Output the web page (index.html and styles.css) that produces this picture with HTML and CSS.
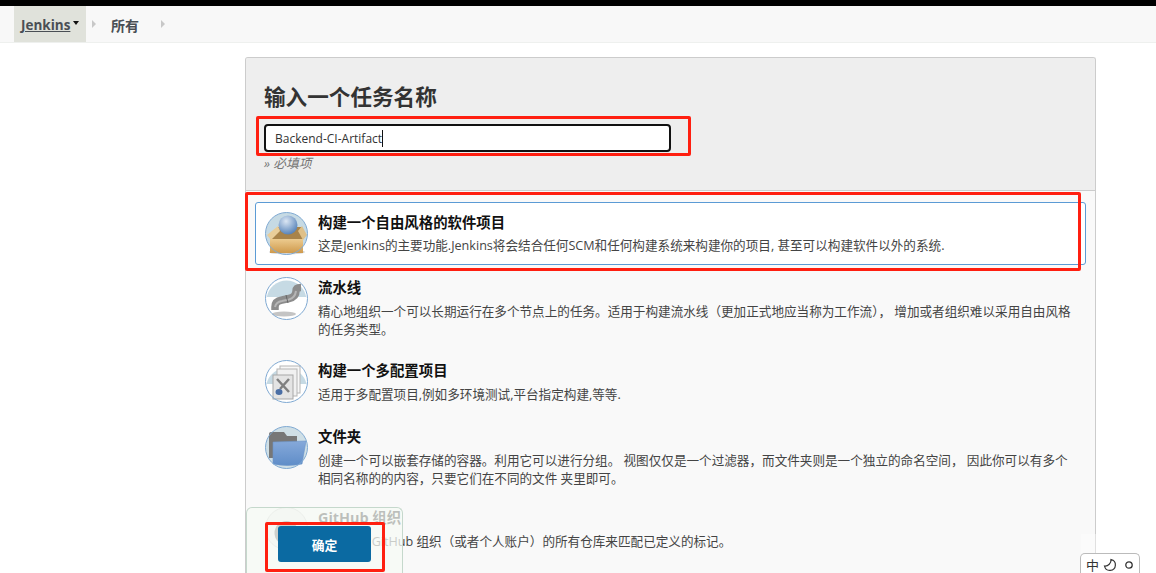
FILE: index.html
```html
<!DOCTYPE html>
<html lang="zh-CN">

<head>
    <meta charset="UTF-8">
    <title>Jenkins</title>
    <link rel="stylesheet" href="styles.css">
</head>

<body>
    <div class="top-strip"></div>
    <nav class="breadcrumbs">
        <div class="crumb crumb-home"><a href="#">Jenkins</a><span class="caret"></span></div>
        <span class="crumb-arrow"></span>
        <div class="crumb crumb-all">所有</div>
        <span class="crumb-arrow"></span>
    </nav>

    <main class="panel">
        <div class="panel-header">
            <h2>输入一个任务名称</h2>
            <div class="name-input">Backend-CI-Artifact<span class="cursor"></span></div>
            <div class="required">» 必填项</div>
        </div>

        <ul class="job-list">
            <li class="job job-active">
                <svg class="job-icon" viewBox="0 0 43 43">
                    <defs>
                        <radialGradient id="ball" cx="0.4" cy="0.3" r="0.75">
                            <stop offset="0" stop-color="#dbe6f3" />
                            <stop offset="1" stop-color="#4f7db6" />
                        </radialGradient>
                        <linearGradient id="carton" x1="0" y1="0" x2="0" y2="1">
                            <stop offset="0" stop-color="#eccb8f" />
                            <stop offset="1" stop-color="#cf9a4c" />
                        </linearGradient>
                        <linearGradient id="folder" x1="0" y1="0" x2="0" y2="1">
                            <stop offset="0" stop-color="#86a9da" />
                            <stop offset="1" stop-color="#5f8dc8" />
                        </linearGradient>
                    </defs>
                    <circle cx="21.5" cy="21.5" r="21" fill="#c6dae4" />
                    <ellipse cx="22" cy="40" rx="18" ry="2.500" fill="#d8d8d8" />
                    <path d="M13 15 H37 L38 27 H5 Z" fill="#a8834a" />
                    <circle cx="23" cy="13" r="9.500" fill="url(#ball)" />
                    <path d="M2 23 L13 14 L15 19 L6 28 Z" fill="#e8cd9a" />
                    <path d="M42 23 L37 14 L33 19 L38 28 Z" fill="#dfc088" />
                    <path d="M5 27 H38 V41 H5 Z" fill="url(#carton)" />
                    <circle cx="21.5" cy="21.5" r="21" fill="none" stroke="#7fa9d2" />
                </svg>
                <div class="job-text">
                    <h3>构建一个自由风格的软件项目</h3>
                    <p>这是Jenkins的主要功能.Jenkins将会结合任何SCM和任何构建系统来构建你的项目, 甚至可以构建软件以外的系统.</p>
                </div>
            </li>
            <li class="job">
                <svg class="job-icon" viewBox="0 0 43 43">
                    <circle cx="21.5" cy="21.5" r="21" fill="#fff" />
                    <path d="M1.800 20 A20 20 0 0 1 41.200 20 Z" fill="#c6dae4" />
                    <ellipse cx="19" cy="37" rx="12" ry="2.500" fill="#c4c4c4" />
                    <path d="M10 33 V30 Q10 24 17 23 L24 21.500 Q31 20 31 14 Q31 10.500 36 10.500" fill="none" stroke="#8c8c8c" stroke-width="7.500" />
                    <path d="M10 30 Q11 25 17 24 L24 22.500 Q30 21 31 14" fill="none" stroke="#b5b5b5" stroke-width="2" />
                    <path d="M21 18 L23 26" stroke="#666" stroke-width="1" />
                    <circle cx="21.5" cy="21.5" r="21" fill="none" stroke="#7fa9d2" />
                </svg>
                <div class="job-text">
                    <h3>流水线</h3>
                    <p>精心地组织一个可以长期运行在多个节点上的任务。适用于构建流水线（更加正式地应当称为工作流）， 增加或者组织难以采用自由风格的任务类型。</p>
                </div>
            </li>
            <li class="job">
                <svg class="job-icon" viewBox="0 0 43 43">
                    <circle cx="21.5" cy="21.5" r="21" fill="#fff" />
                    <path d="M1.500 24 A20.500 20.500 0 0 1 41.500 24 Z" fill="#c6dae4" />
                    <rect x="15" y="6" width="20" height="27" fill="#f7f7f7" stroke="#b5b5b5" />
                    <rect x="12" y="9" width="20" height="27" fill="#f1f1f1" stroke="#b5b5b5" />
                    <rect x="8" y="15" width="20" height="24" fill="#e4e4e4" stroke="#a8a8a8" />
                    <path d="M12 19 L24 32 M24 19 L15 29" stroke="#808080" stroke-width="2.500" fill="none" />
                    <ellipse cx="14" cy="32" rx="3.500" ry="3" fill="#4a6ea5" />
                    <circle cx="21.5" cy="21.5" r="21" fill="none" stroke="#7fa9d2" />
                </svg>
                <div class="job-text">
                    <h3>构建一个多配置项目</h3>
                    <p>适用于多配置项目,例如多环境测试,平台指定构建,等等.</p>
                </div>
            </li>
            <li class="job">
                <svg class="job-icon" viewBox="0 0 43 43">
                    <circle cx="21.5" cy="21.5" r="21" fill="#cfdfe6" />
                    <path d="M4 8 Q4 6 6 6 H19 L22 10 H32 V32 H4 Z" fill="#777" />
                    <path d="M8 16 L41 15 L37 38 Q22 41 8 38 Z" fill="url(#folder)" stroke="#6c94c9" stroke-width="0.600" />
                    <circle cx="21.5" cy="21.5" r="21" fill="none" stroke="#7fa9d2" />
                </svg>
                <div class="job-text">
                    <h3>文件夹</h3>
                    <p>创建一个可以嵌套存储的容器。利用它可以进行分组。 视图仅仅是一个过滤器，而文件夹则是一个独立的命名空间， 因此你可以有多个相同名称的的内容，只要它们在不同的文件 夹里即可。</p>
                </div>
            </li>
            <li class="job">
                <svg class="job-icon" viewBox="0 0 43 43">
                    <circle cx="21.5" cy="21.5" r="21" fill="#eee" stroke="#ccc" />
                    <circle cx="21.5" cy="26" r="12" fill="#555" />
                </svg>
                <div class="job-text">
                    <h3>GitHub 组织</h3>
                    <p>扫描一个 GitHub 组织（或者个人账户）的所有仓库来匹配已定义的标记。</p>
                </div>
            </li>
        </ul>
    </main>

    <!-- floating footer with the save button -->
    <div class="footer-box">
        <button class="ok-button">确定</button>
    </div>

    <!-- red boxes drawn on the screenshot -->
    <div class="mark mark-input"></div>
    <div class="mark mark-job"></div>
    <div class="mark mark-button"></div>

    <div class="ime">
        <span>中</span>
        <svg class="ime-moon" viewBox="0 0 14 14">
            <path d="M8 1.500 A5.500 5.500 0 1 1 1.500 8 A6 6 0 0 0 8 1.500 Z" fill="none" stroke="#333" stroke-width="1.200" />
        </svg>
        <svg class="ime-dot" viewBox="0 0 10 10">
            <circle cx="5" cy="5" r="3.200" fill="none" stroke="#333" stroke-width="1.300" />
        </svg>
    </div>
</body>

</html>
```

FILE: styles.css
```css
* {
    box-sizing: border-box;
}

html,
body {
    height: 100%;
}

body {
    position: relative;
    margin: 0;
    overflow: hidden;
    background-color: #fff;
    color: #333;
    font-family: "Open Sans", "Noto Sans CJK SC", sans-serif;
    font-size: 12.6px;
}

.top-strip {
    height: 6px;
    background-color: #000;
}

/* Breadcrumbs */
.breadcrumbs {
    display: flex;
    align-items: center;
    height: 37px;
    padding-left: 14px;
    background-color: #f8f8f8;
    border-bottom: 1px solid #eef0ee;
}

.crumb {
    display: flex;
    align-items: center;
    height: 36px;
    padding-top: 1px;
    font-size: 13.5px;
    font-weight: 700;
    color: #4a4f55;
}

.crumb-home {
    width: 72px;
    padding-left: 7px;
    background-color: #e0e2db;
}

.crumb-home a {
    color: #4a4f55;
}

.caret {
    margin-left: 3px;
    margin-bottom: 3px;
    border-left: 3.5px solid transparent;
    border-right: 3.5px solid transparent;
    border-top: 4px solid #111;
}

.crumb-arrow {
    width: 0;
    height: 0;
    margin-left: 6px;
    border-top: 4px solid transparent;
    border-bottom: 4px solid transparent;
    border-left: 4px solid #c8c8c8;
}

.crumb-all {
    margin-left: 15px;
    width: 44px;
    font-size: 14px;
    font-weight: 600;
}

/* Panel */
.panel {
    width: 851px;
    height: 516px;
    margin: 14px 0 0 245px;
    overflow: hidden;
    background-color: #f9f9f9;
    border: 1px solid #ccc;
    border-bottom: 0;
    border-radius: 3px 3px 0 0;
}

.panel-header {
    height: 133px;
    padding: 23px 18px 0;
    background-color: #eee;
    border-bottom: 1px solid #ccc;
}

.panel-header h2 {
    margin: 0 0 11px;
    font-size: 21.6px;
    line-height: 32px;
    font-weight: 700;
    color: #333;
}

.name-input {
    display: flex;
    align-items: center;
    width: 407px;
    height: 28px;
    padding: 1px 0 0 9px;
    background-color: #fff;
    border: 2px solid #111;
    border-radius: 4px;
    font-size: 12px;
    color: #333;
}

.cursor {
    width: 1px;
    height: 17px;
    background-color: #111;
}

.required {
    margin-top: 1px;
    font-size: 12.8px;
    font-style: italic;
    color: #777;
}

.job-list {
    margin: 0;
    padding: 11px 9px 0;
    list-style: none;
}

.job {
    display: flex;
    gap: 10px;
    padding: 8px 9px 9px;
    border: 1px solid transparent;
    border-radius: 3px;
    margin-bottom: 3px;
}

.job:nth-child(2) {
    margin-bottom: 2px;
}

.job:nth-child(4) {
    margin-bottom: 0;
}

.job-active {
    height: 63px;
    padding-top: 9px;
    background-color: #fff;
    border-color: #5b9bd5;
}

.job-icon {
    flex: none;
    width: 43px;
    height: 43px;
}

.job-text h3 {
    margin: 1px 0 0;
    font-size: 14.4px;
    line-height: 20px;
    font-weight: 700;
    color: #111;
}

.job-text p {
    margin: 5px 0 0;
    font-size: 12.6px;
    line-height: 18px;
    color: #444;
}

.job-active p {
    margin-top: 4px;
}

/* Floating save bar */
.footer-box {
    position: absolute;
    left: 246px;
    top: 507px;
    width: 157px;
    height: 66px;
    padding: 18px 0 0 31px;
    background-color: rgba(246, 250, 244, 0.75);
    border: 1px solid #c5d8cc;
    border-bottom: 0;
    border-radius: 6px 6px 0 0;
}

.ok-button {
    width: 93px;
    height: 36px;
    padding: 0;
    background-color: #0b6aa2;
    color: #fff;
    border: 0;
    border-radius: 3px;
    font-family: inherit;
    font-size: 12.8px;
    font-weight: 700;
}

/* Annotations */
.mark {
    position: absolute;
    border: 3px solid #ff1f10;
    border-radius: 2px;
}

.mark-input {
    left: 256px;
    top: 116px;
    width: 435px;
    height: 40px;
}

.mark-job {
    left: 245px;
    top: 192px;
    width: 836px;
    height: 79px;
}

.mark-button {
    left: 265px;
    top: 522px;
    width: 120px;
    height: 50px;
}

/* Input method widget */
.ime {
    position: absolute;
    left: 1080px;
    top: 553px;
    display: flex;
    align-items: center;
    gap: 4px;
    width: 60px;
    height: 20px;
    padding: 3px 0 0 5px;
    background-color: #fff;
    border: 1px solid #bbb;
    border-bottom: 0;
    border-radius: 5px 5px 0 0;
    font-size: 13px;
    line-height: 16px;
    color: #333;
}

.ime::before {
    content: "";
    position: absolute;
    left: 0;
    right: 0;
    top: -20px;
    height: 19px;
    background-color: rgba(255, 255, 255, 0.4);
}

.ime-moon {
    width: 14px;
    height: 14px;
}

.ime-dot {
    width: 10px;
    height: 10px;
    margin-left: 3px;
}
```
